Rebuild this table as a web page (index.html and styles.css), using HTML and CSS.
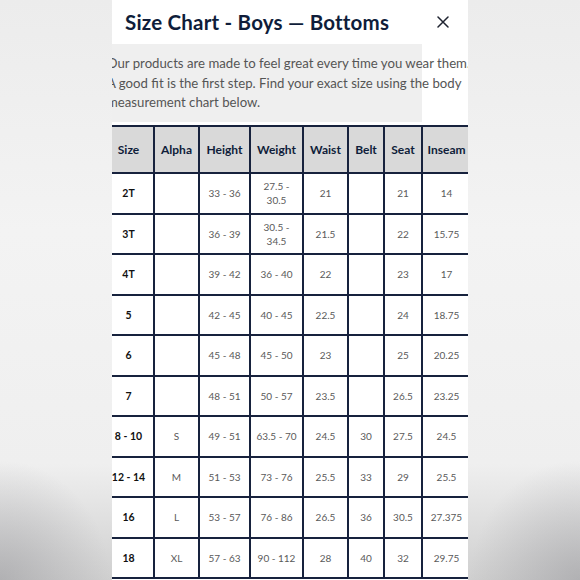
FILE: index.html
```html
<!DOCTYPE html>
<html lang="en">
<head>
<meta charset="utf-8">
<title>Size Chart - Boys — Bottoms</title>
<link rel="stylesheet" href="styles.css">
</head>
<body>
<div class="stage">
  <section class="panel">
    <header class="panel-head">
      <h1 class="title">Size Chart - Boys — Bottoms</h1>
      <button class="close" aria-label="Close">
        <svg width="12" height="12" viewBox="0 0 12 12"><path d="M1 1 L11 11 M11 1 L1 11" stroke="#1f2330" stroke-width="1.5" fill="none" stroke-linecap="round"/></svg>
      </button>
    </header>
    <div class="intro">
      <p>Our products are made to feel great every time you wear them. A good fit is the first step. Find your exact size using the body measurement chart below.</p>
    </div>
    <table class="chart">
      <colgroup>
        <col class="c-size"><col class="c-alpha"><col class="c-height"><col class="c-weight"><col class="c-waist"><col class="c-belt"><col class="c-seat"><col class="c-inseam">
      </colgroup>
      <thead>
        <tr><th>Size</th><th>Alpha</th><th>Height</th><th>Weight</th><th>Waist</th><th>Belt</th><th>Seat</th><th>Inseam</th></tr>
      </thead>
      <tbody>
        <tr><td class="sz">2T</td><td></td><td>33 - 36</td><td>27.5 -<br>30.5</td><td>21</td><td></td><td>21</td><td>14</td></tr>
        <tr><td class="sz">3T</td><td></td><td>36 - 39</td><td>30.5 -<br>34.5</td><td>21.5</td><td></td><td>22</td><td>15.75</td></tr>
        <tr><td class="sz">4T</td><td></td><td>39 - 42</td><td>36 - 40</td><td>22</td><td></td><td>23</td><td>17</td></tr>
        <tr><td class="sz">5</td><td></td><td>42 - 45</td><td>40 - 45</td><td>22.5</td><td></td><td>24</td><td>18.75</td></tr>
        <tr><td class="sz">6</td><td></td><td>45 - 48</td><td>45 - 50</td><td>23</td><td></td><td>25</td><td>20.25</td></tr>
        <tr><td class="sz">7</td><td></td><td>48 - 51</td><td>50 - 57</td><td>23.5</td><td></td><td>26.5</td><td>23.25</td></tr>
        <tr><td class="sz">8 - 10</td><td>S</td><td>49 - 51</td><td>63.5 - 70</td><td>24.5</td><td>30</td><td>27.5</td><td>24.5</td></tr>
        <tr><td class="sz">12 - 14</td><td>M</td><td>51 - 53</td><td>73 - 76</td><td>25.5</td><td>33</td><td>29</td><td>25.5</td></tr>
        <tr><td class="sz">16</td><td>L</td><td>53 - 57</td><td>76 - 86</td><td>26.5</td><td>36</td><td>30.5</td><td>27.375</td></tr>
        <tr><td class="sz">18</td><td>XL</td><td>57 - 63</td><td>90 - 112</td><td>28</td><td>40</td><td>32</td><td>29.75</td></tr>
      </tbody>
    </table>
  </section>
</div>
</body>
</html>
```
FILE: styles.css
```css
* { box-sizing: border-box; }
html, body { margin: 0; padding: 0; height: 580px; overflow: hidden; }
body {
  font-family: Lato, "Open Sans", sans-serif;
  background:
    radial-gradient(ellipse 110px 120px at 0% 100%, rgba(140,140,145,0.45), rgba(140,140,145,0) 100%),
    radial-gradient(ellipse 110px 120px at 100% 100%, rgba(140,140,145,0.45), rgba(140,140,145,0) 100%),
    linear-gradient(to bottom, #ececec 0%, #f3f3f3 40%, #efefef 80%, #cfcfcf 100%);
}
.stage {
  display: flex;
  justify-content: center;
  height: 580px;
}
.panel {
  width: 356px;
  height: 580px;
  background: #ffffff;
  overflow: hidden;
  display: flex;
  flex-direction: column;
}
.panel-head {
  height: 44px;
  flex: none;
  display: flex;
  align-items: center;
  justify-content: space-between;
  padding: 0 19px 0 13px;
}
.title {
  margin: 0;
  font-size: 20.5px;
  font-weight: 700;
  color: #0f1d3a;
  letter-spacing: 0.2px;
  white-space: nowrap;
}
.close {
  border: 0;
  background: none;
  padding: 0;
  width: 12px;
  height: 12px;
  display: flex;
}
.intro {
  flex: none;
  width: 310px;
  height: 78px;
  background: #efefef;
  padding-top: 10px;
}
.intro p {
  margin: 0 0 0 -5px;
  width: 374px;
  font-size: 13.2px;
  line-height: 19.5px;
  color: #555555;
}
.chart {
  flex: none;
  margin: 3px 0 0 -10px;
  width: 368px;
  border-collapse: collapse;
  table-layout: fixed;
}
.c-size { width: 51px; }
.c-alpha { width: 45px; }
.c-height { width: 51px; }
.c-weight { width: 53px; }
.c-waist { width: 45px; }
.c-belt { width: 36px; }
.c-seat { width: 38px; }
.c-inseam { width: 49px; }
.chart th, .chart td {
  border: 2px solid #17223d;
  text-align: center;
  padding: 0;
}
.chart th {
  height: 47px;
  background: #d9d9d9;
  color: #0f1d3a;
  font-size: 12px;
  font-weight: 700;
}
.chart td {
  height: 40.5px;
  font-size: 10px;
  line-height: 14px;
  color: #5a5a5a;
}
.chart td.sz {
  font-weight: 700;
  color: #111111;
  font-size: 10.5px;
}
```
